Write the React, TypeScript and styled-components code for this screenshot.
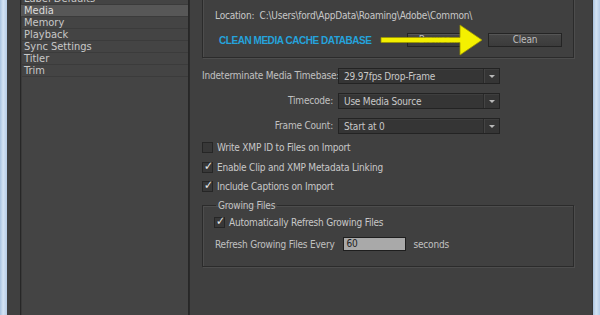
import { Fragment } from 'react';
import styled, { createGlobalStyle } from 'styled-components';

const GlobalStyle = createGlobalStyle`
  html, body {
    margin: 0;
    padding: 0;
    width: 600px;
    height: 315px;
    overflow: hidden;
    background: #404040;
  }
  body {
    font-family: 'DejaVu Sans Condensed', 'Liberation Sans', sans-serif;
    font-size: 10px;
    letter-spacing: -0.2px;
    color: #c4c4c4;
  }
`;

const panels = ['Label Defaults', 'Media', 'Memory', 'Playback', 'Sync Settings', 'Titler', 'Trim'];

const checks = [
  { label: 'Write XMP ID to Files on Import', on: false },
  { label: 'Enable Clip and XMP Metadata Linking', on: true },
  { label: 'Include Captions on Import', on: true },
];

const dropdowns = [
  { label: 'Indeterminate Media Timebase:', value: '29.97fps Drop-Frame' },
  { label: 'Timecode:', value: 'Use Media Source' },
  { label: 'Frame Count:', value: 'Start at 0' },
];

const App = () => {
  return (
    <>
      <GlobalStyle />
      <Window>
        <FrameEdge />
        <Sidebar>
          <ListBox>
            {panels.map((p) => (
              <ListRow key={p} selected={p === 'Media'}>{p}</ListRow>
            ))}
          </ListBox>
        </Sidebar>
        <Settings>
          <CacheGroup>
            <LocationRow>Location:&nbsp;&nbsp;C:\Users\ford\AppData\Roaming\Adobe\Common\</LocationRow>
            <ActionRow>
              <Caption>CLEAN MEDIA CACHE DATABASE</Caption>
              <Button width={63}>Browse...</Button>
              <Button width={74}>Clean</Button>
            </ActionRow>
          </CacheGroup>

          <FieldGrid>
            {dropdowns.map((d) => (
              <Fragment key={d.label}>
                <FieldLabel>{d.label}</FieldLabel>
                <Select>
                  <span>{d.value}</span>
                  <SelectArrow />
                </Select>
              </Fragment>
            ))}
          </FieldGrid>

          <CheckList>
            {checks.map((c) => (
              <CheckRow key={c.label}>
                <CheckBox>{c.on ? '✓' : ''}</CheckBox>
                {c.label}
              </CheckRow>
            ))}
          </CheckList>

          <GrowingGroup>
            <Legend>Growing Files</Legend>
            <CheckRow>
              <CheckBox>✓</CheckBox>
              Automatically Refresh Growing Files
            </CheckRow>
            <RefreshRow>
              Refresh Growing Files Every
              <NumberInput>60</NumberInput>
              <span>seconds</span>
            </RefreshRow>
          </GrowingGroup>

          <Arrow viewBox="0 0 104 32" width="104" height="32">
            <path
              d="M1 13.5 H80 V1 L102 16 L80 31 V18.5 H1 Z"
              fill="#f4f000"
              stroke="#9a9600"
              strokeWidth="0.8"
            />
          </Arrow>
        </Settings>
        <FrameEdge />
      </Window>
    </>
  );
};

export default App;

const Window = styled.div`
  display: flex;
  width: 600px;
  height: 315px;
  overflow: hidden;
  background: #404040;
`;

const FrameEdge = styled.div`
  width: 7px;
  flex: none;
  background: linear-gradient(90deg, #a9c3e0 0%, #d4e3f3 45%, #b6cce6 100%);
`;

const Sidebar = styled.div`
  width: 183px;
  flex: none;
  padding-left: 13px;
  box-sizing: border-box;
  border-right: 1px solid #2a2a2a;
  overflow: hidden;
`;

const ListBox = styled.div`
  margin-top: -8px;
  width: 169px;
  height: 340px;
  box-sizing: border-box;
  background: #444444;
  border: 1px solid #272727;
  box-shadow: inset 1px 0 0 #3a3a3a;
`;

const ListRow = styled.div<{ selected?: boolean }>`
  height: 11px;
  line-height: 11px;
  padding-left: 3px;
  border-bottom: 1px solid #3b3b3b;
  font-size: 11px;
  letter-spacing: 0;
  color: ${(p) => (p.selected ? '#dcdcdc' : '#c8c8c8')};
  background: ${(p) => (p.selected ? '#575757' : 'transparent')};
  white-space: nowrap;
`;

const Settings = styled.div`
  position: relative;
  flex: 1;
  padding: 0 18px 0 12px;
  border-right: 1px solid #353535;
  display: flex;
  flex-direction: column;
`;

const CacheGroup = styled.div`
  margin-top: -20px;
  padding: 28px 11px 10px 12px;
  border: 1px solid #2b2b2b;
  box-shadow: 1px 1px 0 #4d4d4d, inset 1px 1px 0 #4d4d4d;
  display: flex;
  flex-direction: column;
  gap: 10px;
`;

const LocationRow = styled.div`
  height: 14px;
  line-height: 14px;
  color: #c8c8c8;
  white-space: nowrap;
`;

const ActionRow = styled.div`
  display: flex;
  align-items: center;
  gap: 18px;
  height: 14px;
`;

const Caption = styled.span`
  margin-left: 4px;
  margin-right: auto;
  font-family: 'Liberation Sans', Arial, sans-serif;
  font-weight: bold;
  font-size: 10px;
  letter-spacing: -0.45px;
  color: #25a3dc;
`;

const Button = styled.div<{ width: number }>`
  width: ${(p) => p.width}px;
  height: 14px;
  box-sizing: border-box;
  border: 1px solid #242424;
  background: linear-gradient(#464646, #3b3b3b);
  box-shadow: inset 0 1px 0 #555;
  color: #bdbdbd;
  line-height: 12px;
  text-align: center;
`;

const FieldGrid = styled.div`
  display: grid;
  grid-template-columns: 131px 162px;
  column-gap: 5px;
  row-gap: 9px;
  margin-top: 10px;
`;

const FieldLabel = styled.div`
  text-align: right;
  line-height: 16px;
  color: #c0c0c0;
  white-space: nowrap;
`;

const Select = styled.div`
  height: 16px;
  box-sizing: border-box;
  border: 1px solid #232323;
  background: #353535;
  box-shadow: inset 0 1px 0 #3e3e3e;
  display: flex;
  align-items: center;
  padding-left: 5px;
  color: #c8c8c8;
  span {
    flex: 1;
  }
`;

const SelectArrow = styled.div`
  width: 15px;
  height: 14px;
  border-left: 1px solid #2a2a2a;
  box-shadow: inset 1px 0 0 #444;
  position: relative;
  &::after {
    content: '';
    position: absolute;
    left: 5px;
    top: 6px;
    border-left: 3px solid transparent;
    border-right: 3px solid transparent;
    border-top: 3px solid #b8b8b8;
  }
`;

const CheckList = styled.div`
  margin-top: 4px;
  display: flex;
  flex-direction: column;
`;

const CheckRow = styled.div`
  display: flex;
  align-items: center;
  gap: 4px;
  height: 19.5px;
  color: #c8c8c8;
  white-space: nowrap;
`;

const CheckBox = styled.div`
  width: 9px;
  height: 9px;
  border: 1px solid #262626;
  background: #383838;
  color: #e8e8e8;
  font-size: 12px;
  line-height: 7px;
  text-indent: 1px;
  text-align: center;
  overflow: visible;
`;

const GrowingGroup = styled.fieldset`
  margin: 3px 0 0 0;
  padding: 2px 0 10px 11px;
  border: 1px solid #2b2b2b;
  box-shadow: 1px 1px 0 #4d4d4d, inset 1px 1px 0 #4d4d4d;
`;

const Legend = styled.legend`
  margin-left: 2px;
  padding: 0 2px;
  color: #c4c4c4;
`;

const RefreshRow = styled.div`
  display: flex;
  align-items: center;
  gap: 8px;
  height: 24px;
  padding-left: 1px;
  color: #c0c0c0;
  white-space: nowrap;
`;

const NumberInput = styled.div`
  width: 63px;
  height: 14px;
  box-sizing: border-box;
  border: 1px solid #1e1e1e;
  background: #a9a9a9;
  color: #222;
  padding-left: 3px;
  line-height: 12px;
`;

const Arrow = styled.svg`
  position: absolute;
  left: 190px;
  top: 24px;
  overflow: visible;
`;
